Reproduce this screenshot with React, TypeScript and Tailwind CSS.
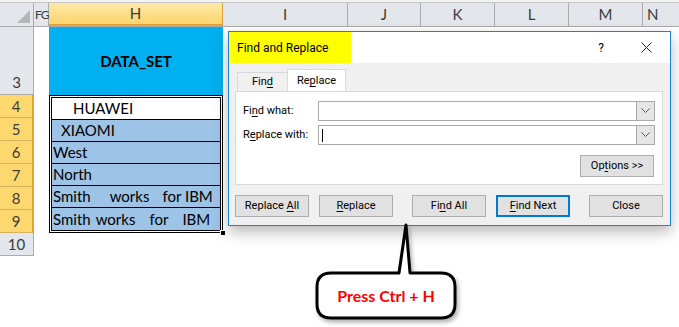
import React from "react";

const colHeaders = [
  { label: "I", w: "w-[125px]" },
  { label: "J", w: "w-[73px]" },
  { label: "K", w: "w-[74px]" },
  { label: "L", w: "w-[74px]" },
  { label: "M", w: "w-[74px]" },
];

const rowNums = ["4", "5", "6", "7", "8", "9"];

const U: React.FC<{ children: React.ReactNode }> = ({ children }) => (
  <span className="underline underline-offset-2">{children}</span>
);

const Chevron = () => (
  <svg width="9" height="6" viewBox="0 0 9 6" fill="none">
    <polyline points="0.5,0.5 4.5,4.5 8.5,0.5" stroke="#555" strokeWidth="1" />
  </svg>
);

const ComboInput: React.FC<{ cursor?: boolean }> = ({ cursor }) => (
  <div className="flex h-[20px] w-[337px] items-center border border-[#a9a9a9] bg-white">
    <div className="flex-1 pl-[3px]">
      {cursor && <div className="h-[13px] w-px bg-black" />}
    </div>
    <div className="flex h-full w-[18px] items-center justify-center border-l border-[#a9a9a9] bg-[#e5e5e5]">
      <Chevron />
    </div>
  </div>
);

const DlgButton: React.FC<{ children: React.ReactNode; primary?: boolean }> = ({ children, primary }) => (
  <div
    className={`flex h-[22px] w-[74px] items-center justify-center bg-[#e1e1e1] text-[11px] text-black ${
      primary ? "border-2 border-[#0078d7]" : "border border-[#adadad]"
    }`}
  >
    <span className="whitespace-pre">{children}</span>
  </div>
);

const App: React.FC = () => {
  return (
    <div
      className="relative h-[327px] w-[679px] overflow-hidden bg-white"
      style={{ fontFamily: "Lato, 'Open Sans', sans-serif" }}
    >
      {/* top strip */}
      <div className="h-[3px] border-b border-[#c6c6c6] bg-[#f4f4f4]" />

      {/* column headers */}
      <div className="flex h-[24px] border-b border-[#ababab] bg-[#e3e6ea] text-[15px] text-[#3c3c3c]">
        <div className="relative w-[34px] border-r border-[#ababab]">
          <svg className="absolute bottom-[3px] right-[3px]" width="13" height="13" viewBox="0 0 13 13">
            <polygon points="13,0 13,13 0,13" fill="#b4b6b9" />
          </svg>
        </div>
        <div className="flex w-[15px] items-center border-r border-[#ababab] pl-px text-[12px] tracking-[-1px]">FG</div>
        <div className="flex w-[174px] items-center justify-center border-b-2 border-r border-b-[#e3a235] border-r-[#e3a235] bg-gradient-to-b from-[#fde9a8] to-[#fbd56c]">
          H
        </div>
        {colHeaders.map((c) => (
          <div key={c.label} className={`flex ${c.w} items-center justify-center border-r border-[#ababab]`}>
            {c.label}
          </div>
        ))}
        <div className="flex flex-1 items-center pl-[4px]">N</div>
      </div>

      {/* body */}
      <div className="flex items-start">
        {/* row headers */}
        <div className="flex w-[34px] flex-col text-[15px] text-[#3c3c3c]">
          <div className="flex h-[68px] items-end justify-center border-b border-r border-[#ababab] bg-[#e3e6ea] pb-[1px]">3</div>
          {rowNums.map((n) => (
            <div
              key={n}
              className="flex h-[23px] items-center justify-center border-b border-r-2 border-b-[#d9b25e] border-r-[#e3a235] bg-[#fdd86e]"
            >
              {n}
            </div>
          ))}
          <div className="flex h-[23px] items-center justify-center border-b border-r border-[#ababab] bg-[#e3e6ea]">10</div>
        </div>

        {/* FG column */}
        <div className="w-[15px]" />

        {/* H column */}
        <div className="flex w-[174px] flex-col text-[15px] text-black">
          <div className="flex h-[68px] items-center justify-center bg-[#00b0f0] font-bold">DATA_SET</div>
          <div className="relative border border-black bg-white p-px">
            <div className="flex flex-col border border-black">
              <div className="flex h-[22px] items-center border-b border-black bg-white pl-[21px]">HUAWEI</div>
              <div className="flex h-[22px] items-center border-b border-black bg-[#9dc3e6] pl-[9px]">XIAOMI</div>
              <div className="flex h-[22px] items-center border-b border-black bg-[#9dc3e6] pl-[1px]">West</div>
              <div className="flex h-[22px] items-center border-b border-black bg-[#9dc3e6] pl-[1px]">North</div>
              <div className="flex h-[22px] items-center border-b border-black bg-[#9dc3e6] pl-[1px]">
                <span>Smith</span>
                <span className="ml-[19px]">works</span>
                <span className="ml-[13px]">for IBM</span>
              </div>
              <div className="flex h-[22px] items-center bg-[#9dc3e6] pl-[1px]">
                <span>Smith</span>
                <span className="ml-[5px]">works</span>
                <span className="ml-[14px]">for</span>
                <span className="ml-[14px]">IBM</span>
              </div>
            </div>
            <div className="absolute bottom-[-4px] right-[-4px] h-[6px] w-[6px] border border-white bg-black" />
          </div>
        </div>
      </div>

      {/* Find and Replace dialog */}
      <div
        className="absolute left-[228px] top-[31px] flex h-[195px] w-[443px] flex-col border border-[#1883d7] bg-[#f0f0f0] shadow-[0_6px_14px_rgba(0,0,0,0.28)]"
        style={{ fontFamily: "Roboto, 'Noto Sans', sans-serif" }}
      >
        <div className="flex h-[31px] items-center bg-white">
          <div className="flex h-full w-[122px] items-center bg-[#ffff00] pl-[8px] text-[12px] text-black">Find and Replace</div>
          <div className="flex-1" />
          <div className="mr-[37px] text-[12px] text-black">?</div>
          <svg className="mr-[18px]" width="11" height="11" viewBox="0 0 11 11">
            <line x1="0.5" y1="0.5" x2="10.5" y2="10.5" stroke="#222" strokeWidth="1" />
            <line x1="10.5" y1="0.5" x2="0.5" y2="10.5" stroke="#222" strokeWidth="1" />
          </svg>
        </div>

        <div className="flex flex-col px-[6px] pt-[6px]">
          {/* tabs */}
          <div className="flex h-[22px] items-end pl-[2px] text-[11px] text-black">
            <div className="flex h-[19px] w-[50px] items-center justify-center border-l border-t border-[#d9d9d9] bg-[#f0f0f0]">
              <span>
                Fin<U>d</U>
              </span>
            </div>
            <div className="-mb-px flex h-[23px] w-[59px] items-center justify-center border-l border-r border-t border-[#d9d9d9] bg-white">
              <span>
                Re<U>p</U>lace
              </span>
            </div>
          </div>

          {/* panel */}
          <div className="flex h-[94px] w-[428px] flex-col border border-[#d9d9d9] bg-white px-[7px] pt-[9px] text-[11px] text-black">
            <div className="flex items-center">
              <div className="w-[75px]">
                Fi<U>n</U>d what:
              </div>
              <ComboInput />
            </div>
            <div className="mt-[4px] flex items-center">
              <div className="w-[75px]">
                R<U>e</U>place with:
              </div>
              <ComboInput cursor />
            </div>
            <div className="mt-[10px] flex justify-end pr-[1px]">
              <div className="flex h-[22px] w-[74px] items-center justify-center border border-[#adadad] bg-[#e1e1e1]">
                <span>
                  Op<U>t</U>ions &gt;&gt;
                </span>
              </div>
            </div>
          </div>

          {/* buttons */}
          <div className="mt-[10px] flex">
            <DlgButton>
              Replace <U>A</U>ll
            </DlgButton>
            <div className="ml-[10px]">
              <DlgButton>
                <U>R</U>eplace
              </DlgButton>
            </div>
            <div className="ml-[19px]">
              <DlgButton>
                Fi<U>n</U>d All
              </DlgButton>
            </div>
            <div className="ml-[10px]">
              <DlgButton primary>
                <U>F</U>ind Next
              </DlgButton>
            </div>
            <div className="ml-[19px]">
              <DlgButton>Close</DlgButton>
            </div>
          </div>
        </div>
      </div>

      {/* callout */}
      <svg
        className="absolute left-[310px] top-[220px] drop-shadow-[2px_3px_2px_rgba(0,0,0,0.3)]"
        width="155"
        height="105"
        viewBox="0 0 155 105"
      >
        <path
          d="M 21 53 H 89 L 96 5 L 100 53 H 131 Q 145 53 145 67 V 84 Q 145 98 131 98 H 21 Q 7 98 7 84 V 67 Q 7 53 21 53 Z"
          fill="white"
          stroke="black"
          strokeWidth="3"
          strokeLinejoin="round"
        />
      </svg>
      <div className="absolute left-[317px] top-[273px] flex h-[45px] w-[138px] items-center justify-center text-[16px] font-bold text-[#ff0000]">
        Press Ctrl + H
      </div>
    </div>
  );
};

export default App;
